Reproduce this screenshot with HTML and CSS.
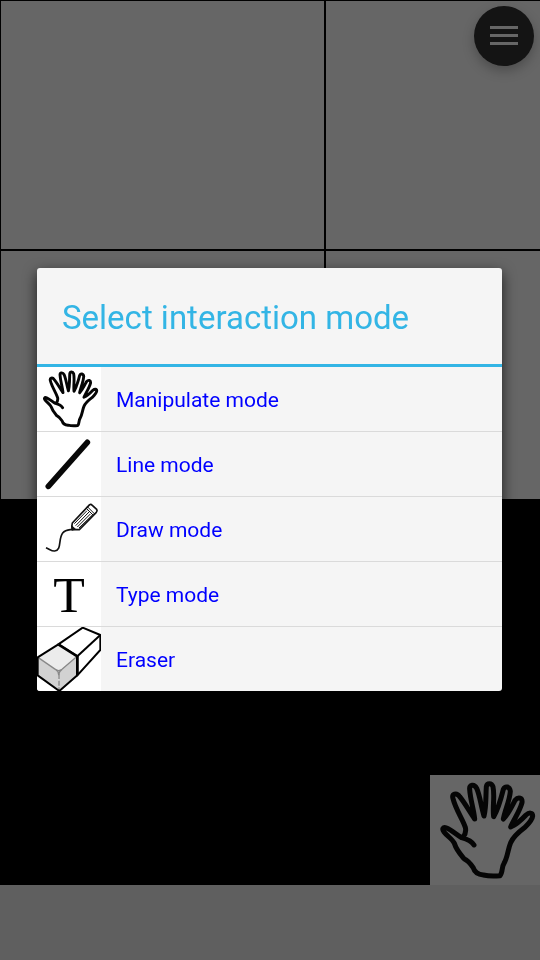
FILE: index.html
```html
<!DOCTYPE html>
<html lang="en">
<head>
    <meta charset="UTF-8">
    <meta name="viewport" content="width=device-width, initial-scale=1.0">
    <title>Select interaction mode</title>
    <link rel="stylesheet" href="styles.css">
</head>
<body>
    <!-- hand outline, shared by the list and the mode button -->
    <svg class="defs" aria-hidden="true">
        <symbol id="hand" viewBox="15 15 330 330">
            <path class="hand-line" d="M147 225 C140 213 128 208 110 203 C96 196 80 180 65 174 C54 170 50 177 57 186 C66 198 83 208 88 220 C94 240 105 252 117 266 C130 272 136 280 144 292 C149 308 158 314 175 315 C192 319 208 319 225 317 C234 308 229 292 237 280 C248 262 248 240 257 218 C266 198 284 184 300 172 C312 160 322 150 323 138 C323 127 312 127 303 135 C288 151 274 164 257 171 C268 146 285 122 291 98 C293 83 280 79 270 91 C260 110 250 132 235 147 C240 120 254 92 256 64 C254 48 240 48 235 58 C228 86 220 116 206 140 C202 110 210 78 204 50 C200 38 186 38 184 50 C182 80 184 112 177 138 C168 108 165 78 155 55 C148 41 132 43 134 58 C136 90 147 120 149 147 C133 124 119 98 104 80 C94 66 80 72 84 86 C92 118 112 146 121 172 C124 184 121 193 114 202"/>
        </symbol>
    </svg>

    <main class="board">
        <div class="drawing">
            <div class="cell"></div>
            <div class="cell"></div>
            <div class="cell"></div>
            <div class="cell"></div>
        </div>
        <button class="menu-button" type="button" aria-label="Menu">
            <span class="bar"></span>
            <span class="bar"></span>
            <span class="bar"></span>
        </button>
        <button class="mode-button" type="button" aria-label="Current mode">
            <svg class="mode-icon"><use href="#hand"/></svg>
        </button>
    </main>
    <footer class="bottom-bar"></footer>

    <div class="overlay">
        <section class="dialog" role="dialog" aria-labelledby="dialog-title">
            <h1 class="dialog-title" id="dialog-title">Select interaction mode</h1>
            <ul class="modes">
                <li class="mode">
                    <button class="mode-option" type="button">
                        <svg class="icon"><use href="#hand"/></svg>
                        <span class="label">Manipulate mode</span>
                    </button>
                </li>
                <li class="mode">
                    <button class="mode-option" type="button">
                        <svg class="icon" viewBox="21 6 192 192">
                            <path d="M55 169 L172 37" stroke="#080808" stroke-width="17" stroke-linecap="round"/>
                        </svg>
                        <span class="label">Line mode</span>
                    </button>
                </li>
                <li class="mode">
                    <button class="mode-option" type="button">
                        <svg class="icon" viewBox="21 6 192 192" fill="none" stroke="#111">
                            <path d="M48 158 C60 163 65 169 74 168 C96 166 84 132 98 114 C107 103 118 105 128 103" stroke-width="5"/>
                            <path d="M127 84 L179 29 Q183 27 187 31 L200 43 Q203 47 199 52 L148 104 L127 104 Q124 94 127 84 Z" stroke-width="5" stroke-linejoin="round"/>
                            <path d="M168 39 L190 61 M172 35 L194 57" stroke-width="3"/>
                            <path d="M133 86 L171 47 M137 92 L177 51 M142 96 L181 57 M147 99 L186 61" stroke-width="3"/>
                            <path d="M125 92 L137 103 L126 105 Z" fill="#111" stroke-width="3"/>
                        </svg>
                        <span class="label">Draw mode</span>
                    </button>
                </li>
                <li class="mode">
                    <button class="mode-option" type="button">
                        <svg class="icon" viewBox="21 6 192 192" aria-hidden="true">
                            <text class="type-glyph" x="117" y="156">T</text>
                        </svg>
                        <span class="label">Type mode</span>
                    </button>
                </li>
                <li class="mode">
                    <button class="mode-option" type="button">
                        <svg class="icon" viewBox="21 15 192 192" stroke="#000" stroke-linejoin="round">
                            <path d="M85 67 L158 17 L211 39 L211 84 L142 160 L142 103 Z" fill="#fff" stroke-width="6"/>
                            <path d="M142 103 L211 39" fill="none" stroke-width="6"/>
                            <path d="M23 106 L85 149 L88 207 L23 160 Z" fill="#d2d2d2" stroke="none"/>
                            <path d="M85 149 L142 103 L142 160 L88 207 Z" fill="#d2d2d2" stroke="none"/>
                            <path d="M23 106 L85 67 L142 103 L86 150 Z" fill="#ececec" stroke="none"/>
                            <path d="M25 107 L76 142 Q86 150 96 142 L138 106 M77 143 Q86 147 86 158 Q88 147 96 142" fill="none" stroke="#888" stroke-width="4"/>
                            <path d="M87 156 L87 204" fill="none" stroke="#888" stroke-width="4" stroke-dasharray="15 5"/>
                            <path d="M85 67 L23 106 L23 160 L88 207 L142 160" fill="none" stroke-width="6"/>
                            <path d="M85 67 L142 103 L142 160" fill="none" stroke-width="8"/>
                        </svg>
                        <span class="label">Eraser</span>
                    </button>
                </li>
            </ul>
        </section>
    </div>
</body>
</html>
```

FILE: styles.css
```css
* {
    margin: 0;
    padding: 0;
    box-sizing: border-box;
}

body {
    min-height: 100vh;
    display: flex;
    flex-direction: column;
    background: #000;
    font-family: Roboto, "Noto Sans", sans-serif;
}

button {
    border: none;
    font: inherit;
    cursor: pointer;
}

.defs {
    position: absolute;
    width: 0;
    height: 0;
}

.hand-line {
    fill: none;
    stroke: #050505;
    stroke-width: 15;
    stroke-linejoin: round;
    stroke-linecap: round;
}

.board {
    position: relative;
    flex: 1;
}

.drawing {
    display: grid;
    grid-template-columns: 60% 1fr;
    grid-template-rows: 248px 248px;
    gap: 2px;
    padding: 1px 0 0 1px;
}

.cell {
    background: #666;
}

.menu-button {
    position: absolute;
    top: 6px;
    right: 6px;
    width: 60px;
    height: 60px;
    display: flex;
    flex-direction: column;
    align-items: center;
    justify-content: center;
    gap: 5px;
    padding-bottom: 1px;
    border-radius: 50%;
    background: #141414;
    box-shadow: 0 5px 12px rgba(0, 0, 0, 0.25);
}

.bar {
    width: 28px;
    height: 3px;
    background: #666;
}

.mode-button {
    position: absolute;
    right: 0;
    bottom: 0;
    width: 110px;
    height: 110px;
    background: #666;
}

.mode-icon {
    display: block;
    width: 100%;
    height: 100%;
}

.bottom-bar {
    height: 75px;
    background: #5f5f5f;
}

.overlay {
    position: fixed;
    inset: 0;
    display: flex;
    align-items: center;
    justify-content: center;
    padding: 0 38px 1px 37px;
}

.dialog {
    width: 100%;
    overflow: hidden;
    border-radius: 3px;
    background: #f5f5f5;
    box-shadow: 0 5px 14px rgba(0, 0, 0, 0.7);
}

.dialog-title {
    padding: 4px 25px 0;
    border-bottom: 3px solid #33b5e5;
    font-size: 33px;
    font-weight: 400;
    line-height: 92px;
    color: #33b5e5;
}

.modes {
    list-style: none;
}

.mode + .mode {
    border-top: 1px solid #dadada;
}

.mode-option {
    display: flex;
    align-items: center;
    gap: 15px;
    width: 100%;
    background: none;
    text-align: left;
    font-size: 21px;
    color: #00f;
}

.label {
    padding-top: 2px;
}

.icon {
    width: 64px;
    height: 64px;
    background: #fff;
}

.type-glyph {
    font-family: "Liberation Serif", serif;
    font-size: 155px;
    text-anchor: middle;
}
```
